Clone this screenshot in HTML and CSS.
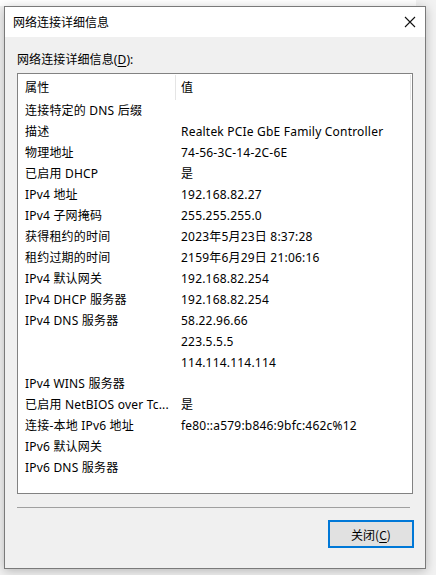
FILE: index.html
```html
<!DOCTYPE html>
<html lang="zh-CN">
<head>
<meta charset="utf-8">
<title>网络连接详细信息</title>
<link rel="stylesheet" href="styles.css">
</head>
<body>
<div class="backdrop">
  <div class="window">
    <div class="titlebar">
      <span class="title">网络连接详细信息</span>
      <span class="close">
        <svg width="12" height="12" viewBox="0 0 12 12"><path d="M1 1 L11 11 M11 1 L1 11" stroke="#111" stroke-width="1.1" fill="none"/></svg>
      </span>
    </div>
    <div class="content">
      <div class="caption">网络连接详细信息(<u>D</u>):</div>
      <div class="listbox">
        <div class="row header">
          <div class="cell k">属性</div>
          <div class="cell v">值</div>
        </div>
        <div class="row"><div class="cell k">连接特定的 DNS 后缀</div><div class="cell v"></div></div>
        <div class="row"><div class="cell k">描述</div><div class="cell v">Realtek PCIe GbE Family Controller</div></div>
        <div class="row"><div class="cell k">物理地址</div><div class="cell v">74-56-3C-14-2C-6E</div></div>
        <div class="row"><div class="cell k">已启用 DHCP</div><div class="cell v">是</div></div>
        <div class="row"><div class="cell k">IPv4 地址</div><div class="cell v">192.168.82.27</div></div>
        <div class="row"><div class="cell k">IPv4 子网掩码</div><div class="cell v">255.255.255.0</div></div>
        <div class="row"><div class="cell k">获得租约的时间</div><div class="cell v">2023年5月23日 8:37:28</div></div>
        <div class="row"><div class="cell k">租约过期的时间</div><div class="cell v">2159年6月29日 21:06:16</div></div>
        <div class="row"><div class="cell k">IPv4 默认网关</div><div class="cell v">192.168.82.254</div></div>
        <div class="row"><div class="cell k">IPv4 DHCP 服务器</div><div class="cell v">192.168.82.254</div></div>
        <div class="row"><div class="cell k">IPv4 DNS 服务器</div><div class="cell v">58.22.96.66</div></div>
        <div class="row"><div class="cell k"></div><div class="cell v">223.5.5.5</div></div>
        <div class="row"><div class="cell k"></div><div class="cell v">114.114.114.114</div></div>
        <div class="row"><div class="cell k">IPv4 WINS 服务器</div><div class="cell v"></div></div>
        <div class="row"><div class="cell k">已启用 NetBIOS over Tc...</div><div class="cell v">是</div></div>
        <div class="row"><div class="cell k">连接-本地 IPv6 地址</div><div class="cell v">fe80::a579:b846:9bfc:462c%12</div></div>
        <div class="row"><div class="cell k">IPv6 默认网关</div><div class="cell v"></div></div>
        <div class="row"><div class="cell k">IPv6 DNS 服务器</div><div class="cell v"></div></div>
      </div>
      <div class="separator"></div>
      <div class="actions">
        <button class="btn">关闭(<u>C</u>)</button>
      </div>
    </div>
  </div>
</div>
</body>
</html>
```

FILE: styles.css
```css
* { box-sizing: border-box; }
html, body { margin: 0; padding: 0; }
body {
  width: 436px;
  height: 575px;
  overflow: hidden;
  background: #f4f4f4;
  font-family: "Noto Sans", "Noto Sans CJK SC", sans-serif;
  font-size: 12px;
  color: #000;
}
.backdrop {
  width: 436px;
  height: 575px;
  padding: 6px 0 0 4px;
  background: linear-gradient(#ffffff, #ffffff) top left / 416px 6px no-repeat, #f2f2f2;
}
.window {
  width: 422px;
  height: 563px;
  border: 1px solid #7a7a7a;
  background: #f0f0f0;
  box-shadow: 0 2px 10px rgba(0,0,0,0.25);
  display: flex;
  flex-direction: column;
}
.titlebar {
  height: 30px;
  background: #fff;
  display: flex;
  align-items: center;
  justify-content: space-between;
  padding: 0 9px 0 8px;
}
.title {
  font-family: "Noto Sans CJK SC", sans-serif;
  font-size: 12px;
  line-height: 16px;
}
.close {
  width: 12px;
  height: 12px;
  display: flex;
}
.content {
  padding: 14px 11px 0 12px;
  display: flex;
  flex-direction: column;
}
.caption {
  line-height: 18px;
  height: 18px;
  margin-bottom: 4px;
  letter-spacing: 0.1px;
}
.caption u, .btn u { text-decoration: underline; text-underline-offset: 2px; }
.listbox {
  width: 396px;
  height: 421px;
  border: 1px solid #828282;
  background: #fff;
  padding-top: 1px;
}
.row {
  display: grid;
  grid-template-columns: 157px 1fr;
  height: 21px;
  align-items: center;
  line-height: 21px;
  white-space: nowrap;
  letter-spacing: 0.2px;
}
.row.header {
  height: 25px;
  line-height: 25px;
  margin-bottom: 0;
}
.cell.k { padding-left: 7px; overflow: hidden; }
.cell.v { padding-left: 6px; }
.row.header .cell { height: 25px; }
.row.header .cell.v {
  border-left: 1px solid #e5e5e5;
  padding-left: 5px;
  margin-right: 1px;
  border-right: 1px solid #e5e5e5;
}
.separator {
  width: 393px;
  height: 1px;
  background: #a0a0a0;
  margin-top: 13px;
}
.actions {
  display: flex;
  justify-content: flex-end;
  padding-right: 0;
  margin-top: 12px;
}
.btn {
  width: 86px;
  height: 28px;
  border: 2px solid #0078d7;
  background: #e1e1e1;
  font-family: "Noto Sans CJK SC", sans-serif;
  font-size: 12px;
  color: #000;
  padding: 0;
  margin: 0;
}
```
